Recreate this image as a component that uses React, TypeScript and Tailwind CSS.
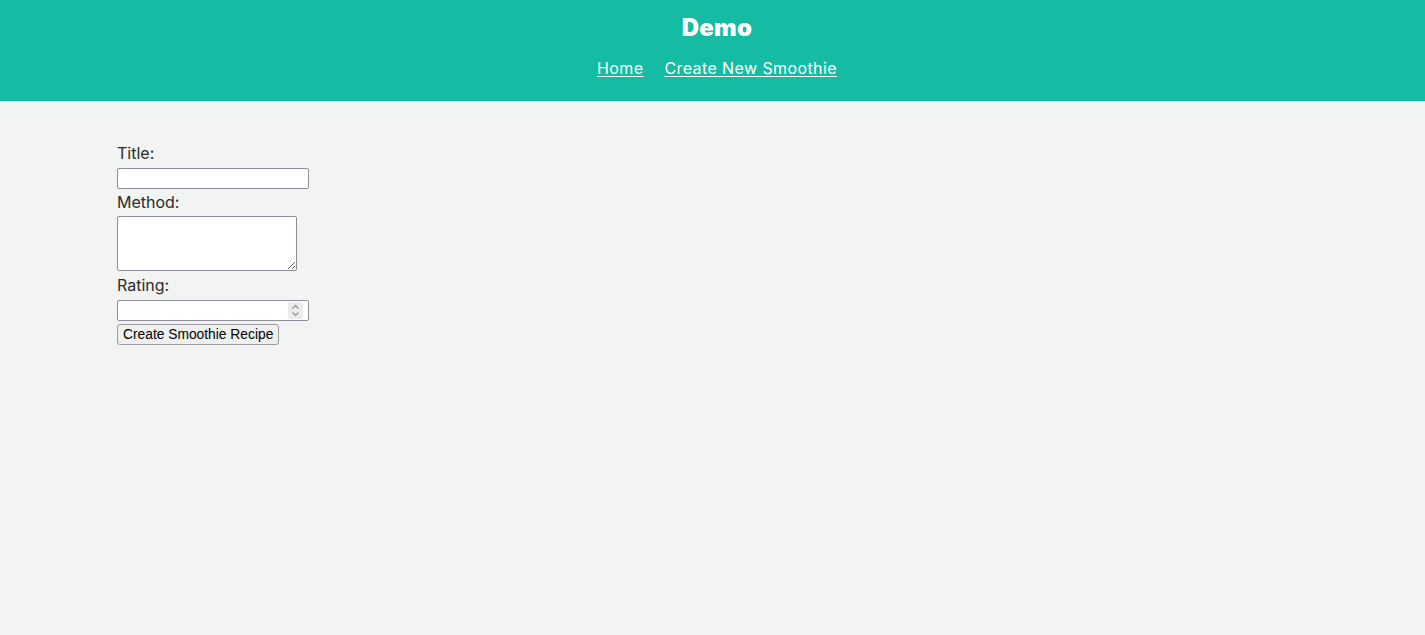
import { FC } from 'react';

const fieldClass =
  'block h-[21px] rounded-[2px] border border-[#8e8e99] bg-white px-1 text-[13px] outline-none';

const Header: FC = () => (
  <header className="flex h-[101px] flex-col items-center bg-[#15bca3] pl-[9px] pt-[12px] text-white">
    <h1 className="text-[24px] font-black leading-8 tracking-[0.3px]">Demo</h1>
    <nav className="mt-[12px] flex gap-x-[21px] text-[16px] leading-6 tracking-[0.4px]">
      <a href="#" className="underline underline-offset-2">
        Home
      </a>
      <a href="#" className="underline underline-offset-2">
        Create New Smoothie
      </a>
    </nav>
  </header>
);

const CreateForm: FC = () => (
  <form className="flex flex-col items-start pl-[117px] pt-[40px] text-[16px] leading-6 text-[#2b2b2b]">
    <label htmlFor="title">Title:</label>
    <input id="title" type="text" className={`${fieldClass} mt-[3px] w-[192px]`} />
    <label htmlFor="method" className="mt-[1px]">
      Method:
    </label>
    <textarea
      id="method"
      className="mt-[2px] block h-[55px] w-[180px] rounded-[2px] border border-[#8e8e99] bg-white px-1 text-[13px] outline-none"
    />
    <label htmlFor="rating" className="mt-[2px]">
      Rating:
    </label>
    <div className="relative mt-[3px]">
      <input
        id="rating"
        type="number"
        className={`${fieldClass} w-[192px] [appearance:textfield] [&::-webkit-inner-spin-button]:appearance-none [&::-webkit-outer-spin-button]:appearance-none`}
      />
      <div className="pointer-events-none absolute right-[6px] top-[2px] flex h-[17px] w-[15px] items-center justify-center rounded-[2px] bg-[#ececec]">
        <svg width="9" height="15" viewBox="0 0 9 15" fill="none" stroke="#8a8a8a" strokeWidth="1.1">
          <path d="M1.5 5.5 L4.5 2.5 L7.5 5.5" />
          <path d="M1.5 9.5 L4.5 12.5 L7.5 9.5" />
        </svg>
      </div>
    </div>
    <button
      type="button"
      className="mt-[3px] h-[21px] rounded-[3px] border border-[#9a9a9f] bg-[#efeff0] px-[5px] text-[13.8px] leading-none text-black"
      style={{ fontFamily: '"Liberation Sans", Arial, sans-serif' }}
    >
      Create Smoothie Recipe
    </button>
  </form>
);

const App: FC = () => (
  <div className="min-h-[635px] bg-[#f2f3f3] font-['Inter',sans-serif]">
    <Header />
    <CreateForm />
  </div>
);

export default App;
